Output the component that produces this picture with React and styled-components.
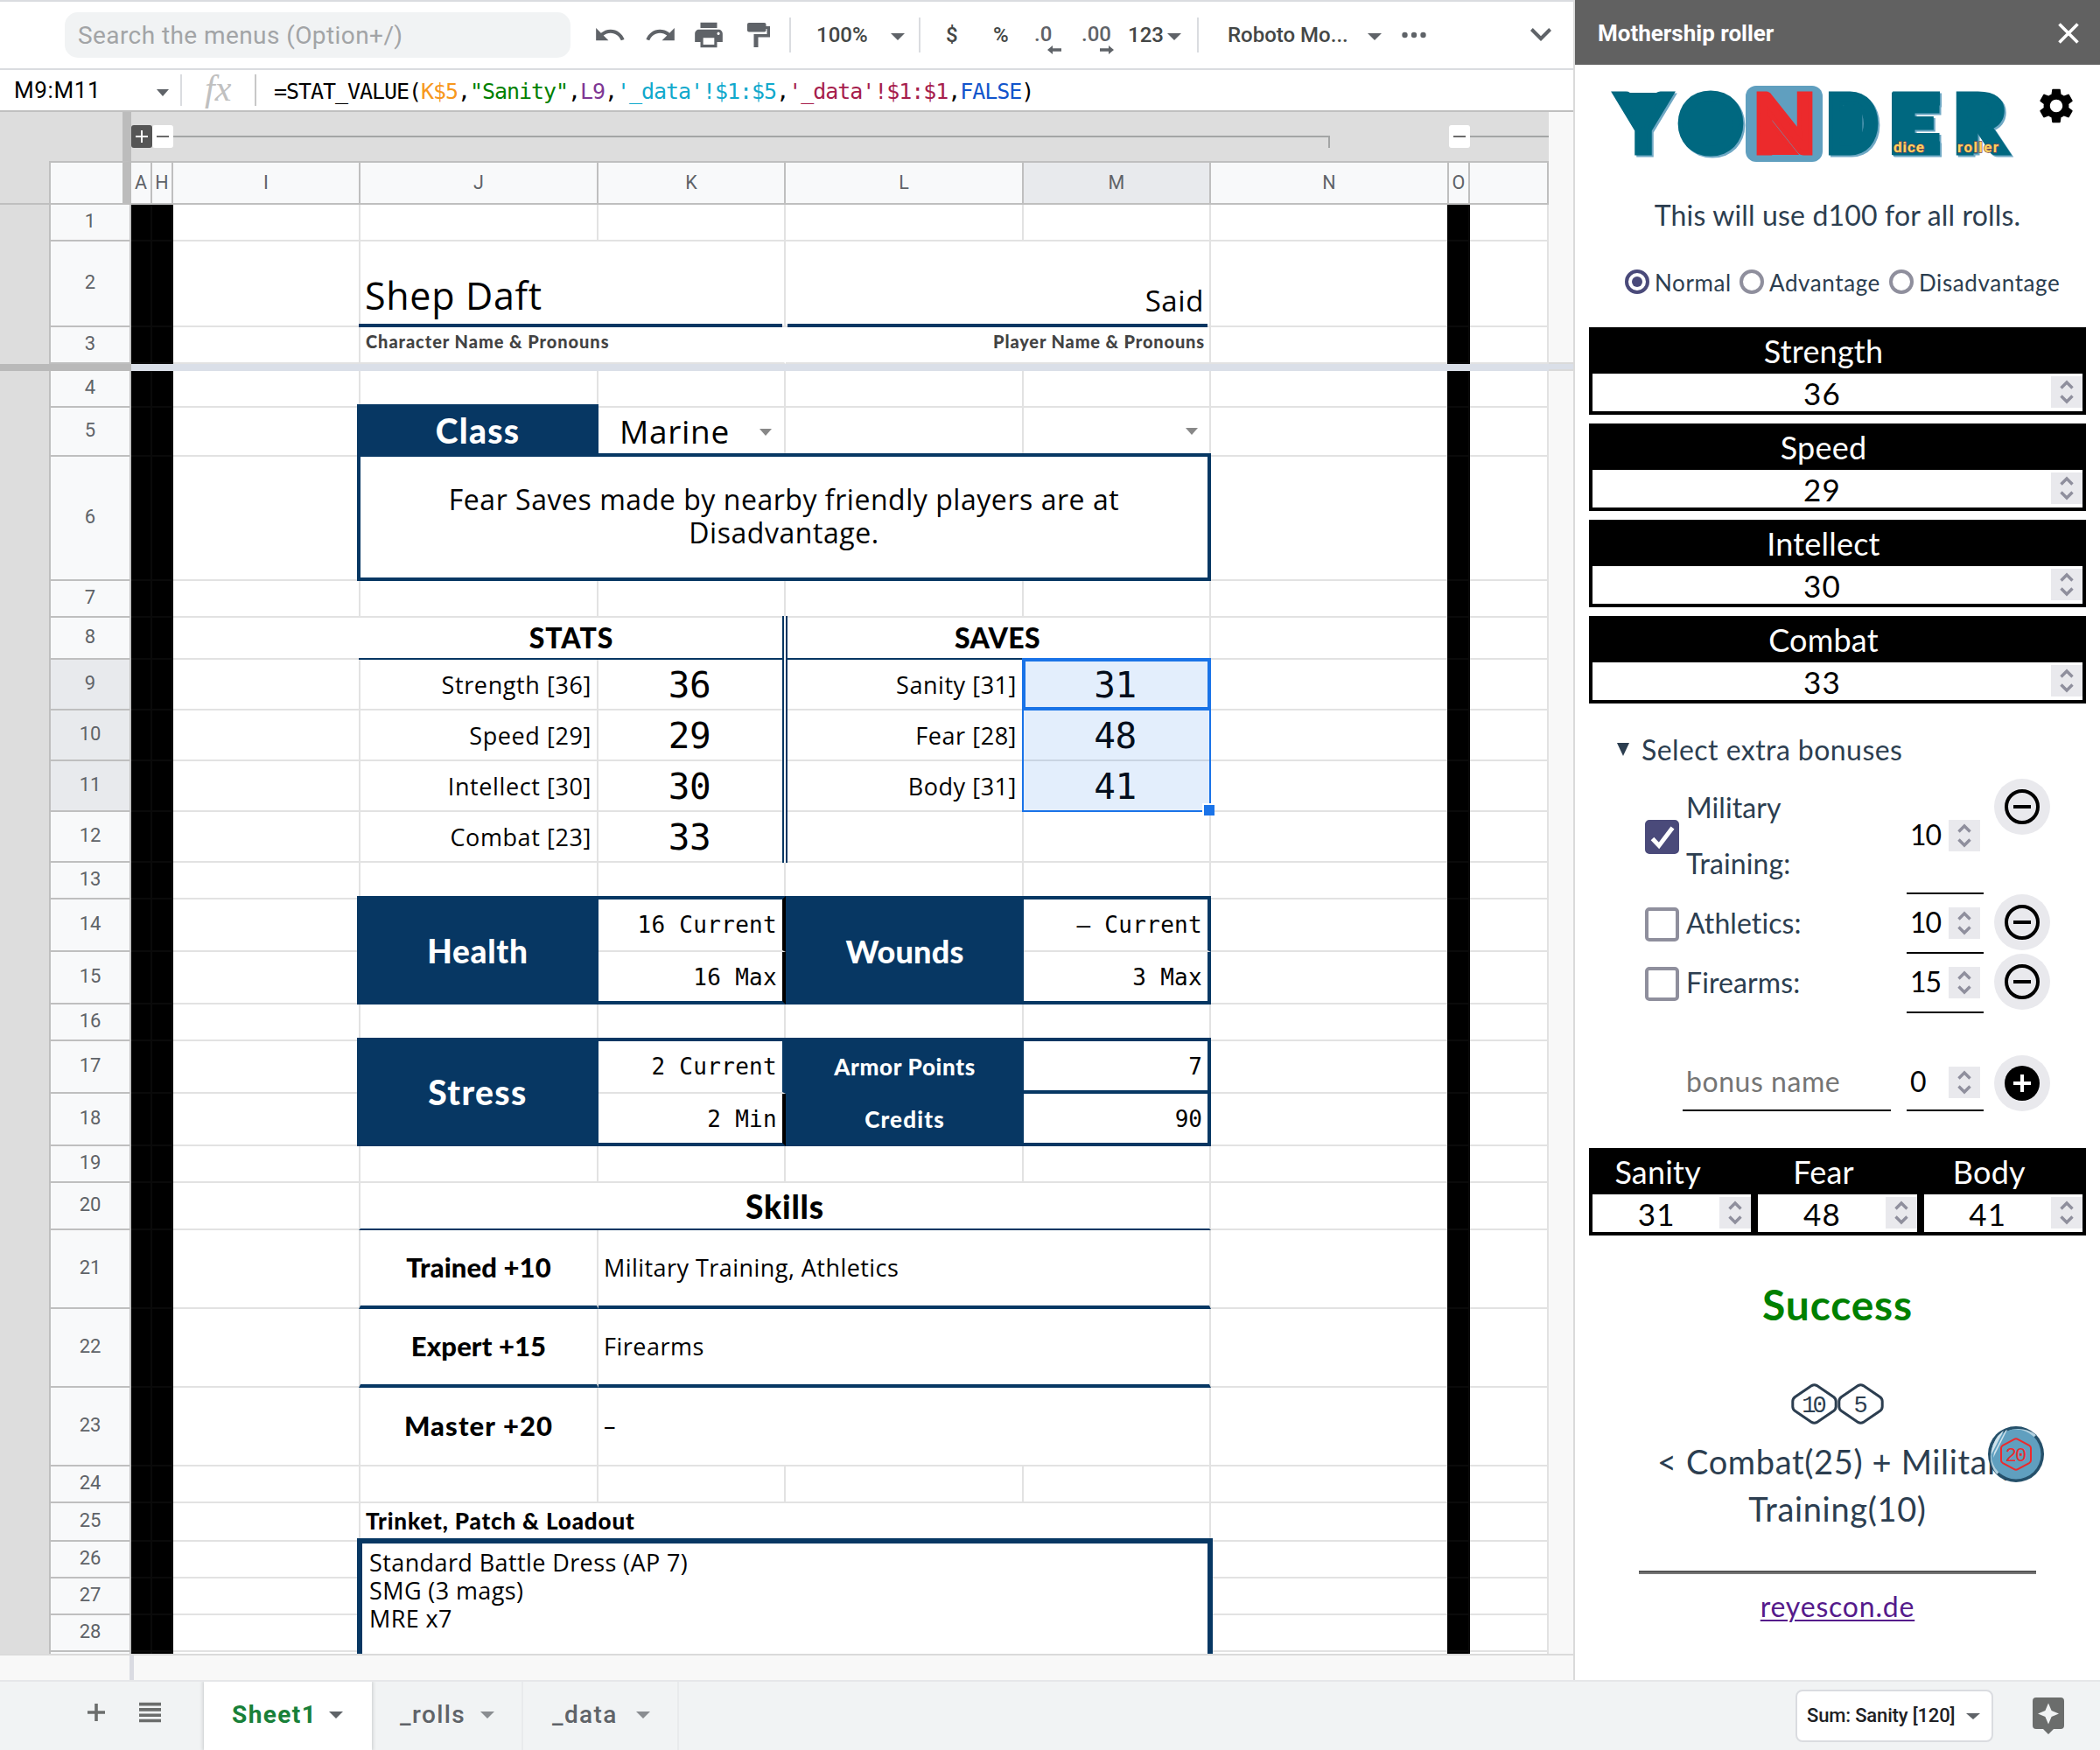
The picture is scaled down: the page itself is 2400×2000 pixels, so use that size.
import React from "react";
import styled, { createGlobalStyle, css } from "styled-components";
import { MdSettings } from "react-icons/md";

const ROBOTO = 'Roboto, "Liberation Sans", sans-serif';
const HUMANIST = '"Open Sans", "Noto Sans", sans-serif';
const DISPLAY = 'Lato, "Open Sans", sans-serif';
const MONO = '"DejaVu Sans Mono", "Liberation Mono", monospace';

const NAVY = "#073763";
const LINE = "#e2e2e2";
const HEADER_LINE = "#bfbfbf";
const BLUE = "#1a73e8";
const INK = "#2c3e50";

const GlobalStyle = createGlobalStyle`
  *, *::before, *::after { box-sizing: border-box; }
  body { margin: 0; background: #fff; font-family: ${ROBOTO}; }
`;

/* ---------- page frame ---------- */

const Page = styled.div`
  width: 2400px;
  height: 2000px;
  display: flex;
  flex-direction: column;
  overflow: hidden;
`;

const Body = styled.div`
  display: flex;
  height: 1920px;
`;

const Workspace = styled.main`
  width: 1798px;
  display: flex;
  flex-direction: column;
`;

/* ---------- toolbar ---------- */

const Toolbar = styled.div`
  height: 80px;
  flex: none;
  display: flex;
  align-items: center;
  padding-left: 74px;
  border-top: 2px solid #dadce0;
  border-bottom: 2px solid #dadce0;
  color: #444746;
  font: 500 24px/1 ${ROBOTO};
  white-space: nowrap;
`;

const Search = styled.div`
  width: 578px;
  height: 52px;
  display: flex;
  align-items: center;
  padding: 1px 0 0 15px;
  border-radius: 15px;
  background: #f1f3f4;
  color: #a2a4a6;
  font: 400 28px/1 ${ROBOTO};
  letter-spacing: 0.42px;
`;

const ToolIcon = styled.svg`
  flex: none;
  margin-left: ${(p) => p.$ml}px;
  fill: #5f6368;
`;

const ToolLabel = styled.span`
  width: ${(p) => p.$w}px;
  margin-left: ${(p) => p.$ml || 0}px;
  color: ${(p) => p.$color || "#444746"};
`;

const ToolDivider = styled.span`
  width: 2px;
  height: 40px;
  margin-left: ${(p) => p.$ml}px;
  background: #dadce0;
`;

const Decimal = styled.span`
  width: ${(p) => p.$w}px;
  height: 44px;
  margin-left: ${(p) => p.$ml || 0}px;
  padding-top: 9px;
  display: flex;
  flex-direction: column;
  align-items: flex-end;
  color: #5f6368;

  span { align-self: flex-start; height: 26px; }
  svg { fill: #5f6368; flex: none; }
`;

const Caret = styled.i`
  flex: none;
  width: 0;
  height: 0;
  margin-left: ${(p) => p.$ml || 0}px;
  margin-right: ${(p) => p.$mr || 0}px;
  margin-top: ${(p) => p.$mt || 0}px;
  border: solid transparent;
  border-width: ${(p) => p.$h || 8}px ${(p) => (p.$w || 16) / 2}px 0;
  border-top-color: ${(p) => p.$color || "#5f6368"};
`;

/* ---------- formula bar ---------- */

const FormulaBar = styled.div`
  height: 48px;
  flex: none;
  display: flex;
  align-items: center;
  border-bottom: 2px solid #c0c0c0;
  white-space: nowrap;
`;

const NameBox = styled.div`
  width: 208px;
  height: 36px;
  display: flex;
  align-items: center;
  padding-left: 16px;
  border-right: 2px solid #dadce0;
  font: 400 26px/1 ${ROBOTO};
  letter-spacing: 0.6px;
  color: #000;

  span { width: 163px; }
`;

const Fx = styled.div`
  width: 85px;
  height: 36px;
  padding: 0 0 0 26px;
  border-right: 2px solid #c8c8c8;
  color: #c0c0c0;
  font: italic 400 42px/32px "Liberation Serif", serif;
`;

const Formula = styled.div`
  padding: 2px 0 0 20px;
  font: 400 25px/1 ${MONO};
  letter-spacing: -1.05px;
  color: #000;
`;

const Token = styled.span`
  color: ${(p) => p.$color};
`;

/* ---------- sheet ---------- */

const SheetArea = styled.div`
  display: flex;
  flex: 1;
  min-height: 0;
`;

const Sheet = styled.div`
  width: 1770px;
  display: flex;
  flex-direction: column;
`;

const OutlineBand = styled.div`
  height: 56px;
  flex: none;
  display: flex;
  align-items: center;
  background: #ddd;
`;

const OutlineGutter = styled.div`
  width: 150px;
  height: 56px;
  border-right: 10px solid #bcbcbc;
`;

const Toggle = styled.span`
  position: relative;
  width: 24px;
  height: 26px;
  border-radius: 3px;
  background: ${(p) => (p.$dark ? "#555" : "#fff")};

  &::before,
  &::after {
    content: "";
    position: absolute;
    background: ${(p) => (p.$dark ? "#fff" : "#6b6b6b")};
  }
  &::before { left: 5px; right: 5px; top: 12px; height: 2px; }
  &::after { left: 11px; width: 2px; top: 6px; height: ${(p) => (p.$dark ? 14 : 0)}px; }
`;

const OutlineLine = styled.span`
  width: ${(p) => p.$w}px;
  height: 14px;
  margin: 12px ${(p) => p.$mr || 0}px 0 0;
  border-top: 2px solid #a3a5a5;
  border-right: ${(p) => (p.$tick ? "2px solid #a3a5a5" : "0")};
`;

const gridColumns = css`
  display: grid;
  grid-template-columns: 58px 92px 24px 24px 214px 272px 214px 272px 214px 272px 24px 90px;
`;

const ColumnHeads = styled.div`
  ${gridColumns}
  height: 50px;
  flex: none;
`;

const Gutter = styled.div`
  grid-column: 1;
  grid-row: ${(p) => p.$rows || 1};
  background: #ddd;
  border-right: 2px solid ${HEADER_LINE};
  border-bottom: ${(p) => (p.$head ? `2px solid ${HEADER_LINE}` : "0")};
`;

const Corner = styled.div`
  background: #f8f9fa;
  border-top: 2px solid ${HEADER_LINE};
  border-right: 10px solid #bcbcbc;
  border-bottom: 2px solid ${HEADER_LINE};
`;

const HeadCell = styled.div`
  display: flex;
  align-items: center;
  justify-content: center;
  border: solid ${HEADER_LINE};
  border-width: 2px 2px 2px 0;
  background: ${(p) => (p.$active ? "#e8eaed" : "#f8f9fa")};
  color: #5f6368;
  font: 400 21.5px/1 ${ROBOTO};
`;

const Grid = styled.div`
  ${gridColumns}
  grid-template-rows: ${(p) => p.$heights.map((h) => `${h}px`).join(" ")};
  height: ${(p) => p.$h}px;
  flex: none;
  overflow: hidden;
`;

const RowHead = styled.div`
  grid-column: 2;
  grid-row: ${(p) => p.$row};
  display: flex;
  align-items: center;
  justify-content: center;
  padding-bottom: 2px;
  border: solid ${HEADER_LINE};
  border-width: 0 2px 2px 0;
  background: ${(p) => (p.$active ? "#e8eaed" : "#f8f9fa")};
  color: #5f6368;
  font: 400 22px/1 ${ROBOTO};
`;

const BlankCell = styled.div`
  grid-column: ${(p) => p.$col};
  grid-row: ${(p) => p.$row};
  border: solid ${(p) => (p.$black ? "#0a0a0a" : LINE)};
  border-width: 0 2px 2px 0;
  background: ${(p) => (p.$black ? "#000" : "#fff")};
  margin-left: ${(p) => (p.$wide ? -2 : 0)}px;
`;

const fonts = {
  display: css`font-family: ${DISPLAY}; font-weight: 900;`,
  body: css`font-family: ${HUMANIST}; font-weight: 400;`,
  mono: css`font-family: ${MONO}; font-weight: 400;`,
};

const Cell = styled.div`
  grid-column: ${(p) => p.$col};
  grid-row: ${(p) => p.$row};
  min-width: 0;
  display: flex;
  align-items: ${(p) => p.$valign || "center"};
  justify-content: ${(p) => p.$align || "center"};
  text-align: center;
  margin: ${(p) => p.$out || "0"};
  padding: ${(p) => p.$drop || 0}px ${(p) => p.$pr || (p.$align === "flex-end" ? 6 : 0)}px ${(p) => p.$lift || 0}px
    ${(p) => (p.$align === "flex-start" ? p.$pl || 6 : 0)}px;
  border: 0 solid ${LINE};
  border-right: ${(p) => p.$br || `2px solid ${LINE}`};
  border-bottom: ${(p) => p.$bb || `2px solid ${LINE}`};
  border-top: ${(p) => p.$bt || "0"};
  border-left: ${(p) => p.$bl || "0"};
  background: ${(p) => p.$bg || "#fff"};
  color: ${(p) => p.$color || "#000"};
  ${(p) => fonts[p.$font || "body"]}
  font-size: ${(p) => p.$size || 27}px;
  line-height: ${(p) => (p.$lh ? `${p.$lh}px` : "1")};
  letter-spacing: ${(p) => p.$ls || 0}px;
  white-space: pre;
`;

const Rule = styled.div`
  grid-column: ${(p) => p.$col};
  grid-row: ${(p) => p.$row};
  align-self: end;
  height: 4px;
  margin: 0 4px 0 ${(p) => p.$ml}px;
  background: ${NAVY};
`;

const DoubleRule = styled.div`
  grid-column: 7;
  grid-row: 5 / 10;
  justify-self: end;
  width: 6px;
  margin: -2px -2px 0 0;
  border: solid ${NAVY};
  border-width: 0 2px;
  background: #fff;
`;

const SelectionRange = styled.div`
  grid-column: 9;
  grid-row: 6 / 9;
  position: relative;
  margin: -2px 0 0 -2px;
  border: 2px solid ${BLUE};
  background: rgba(26, 115, 232, 0.12);

  &::after {
    content: "";
    position: absolute;
    right: -6px;
    bottom: -6px;
    width: 12px;
    height: 12px;
    background: ${BLUE};
    box-shadow: -2px -2px 0 #fff;
  }
`;

const ActiveCell = styled.div`
  grid-column: 9;
  grid-row: 6;
  margin: -2px 0 0 -2px;
  border: 4px solid ${BLUE};
`;

const Loadout = styled.div`
  grid-column: 6 / 10;
  grid-row: 23 / 27;
  margin: -4px -2px -4px -4px;
  padding: 6px 8px;
  border: solid ${NAVY};
  border-width: 6px 6px 0;
  background: #fff;
  color: #000;
  font: 400 27px/32px ${HUMANIST};
  letter-spacing: 0.4px;
  white-space: pre-line;
`;

const FreezeBar = styled.div`
  height: 8px;
  flex: none;
  background: #dadfe8;
  border-left: 150px solid #b9b9b9;
`;

const VScroll = styled.div`
  flex: 1;
  background: #f8f8f8;
  display: flex;
  flex-direction: column;

  &::before {
    content: "";
    height: 10px;
    margin-top: 286px;
    background: #dadfe8;
    border: solid #dadada;
    border-width: 2px 0;
  }
`;

const HScroll = styled.div`
  height: 30px;
  flex: none;
  display: flex;
  border-top: 2px solid #dadada;
  background: #f8f8f8;

  &::before {
    content: "";
    width: 153px;
    border-right: 5px solid #dadbe2;
  }
`;

/* ---------- sidebar ---------- */

const Sidebar = styled.aside`
  position: relative;
  width: 602px;
  border-left: 2px solid #dadada;
  background: #fff;
  color: ${INK};
  font: 400 32px/1 ${DISPLAY};
  white-space: nowrap;
`;

const SidebarTitle = styled.header`
  height: 74px;
  display: flex;
  align-items: center;
  justify-content: space-between;
  padding: 1px 24px 0 26px;
  background: #616161;
  color: #fff;
  font: 700 26px/1 ${ROBOTO};
`;

const Brand = styled.div`
  height: 113px;
  display: flex;
  align-items: flex-start;
  padding: 21px 0 0 40px;
`;

const LogoArt = styled.svg`
  overflow: visible;
  font-family: Lato, sans-serif;
  font-weight: 900;
  font-size: 93px;
`;

const LogoTeal = styled.g`
  fill: #006880;
  stroke: #006880;
  filter: drop-shadow(2px 2px 0 #6fa8c4);
`;

const LogoRed = styled.g`
  fill: #ec2a2c;
  stroke: #ec2a2c;
`;

const LogoCaption = styled.g`
  font: 700 17px Roboto, sans-serif;
  fill: #ffd35e;
  stroke: #7c4650;
  stroke-width: 1.4px;
  paint-order: stroke;
`;

const GearButton = styled.span`
  width: 48px;
  height: 48px;
  margin: 2px 0 0 26px;
  color: #000;
  svg { display: block; }
`;

const Intro = styled.p`
  margin: 39px 0 0;
  line-height: 40px;
  text-align: center;
  letter-spacing: 0.16px;
`;

const Modes = styled.div`
  display: flex;
  margin-top: 42px;
  padding-left: 57px;
  font-size: 26px;
`;

const Mode = styled.label`
  width: ${(p) => p.$w}px;
  height: 28px;
  display: flex;
  align-items: center;
  gap: 6px;
  letter-spacing: 0.6px;

  em { font-style: normal; padding-top: 2px; }
`;

const Radio = styled.span`
  flex: none;
  width: 28px;
  height: 28px;
  padding: 4px;
  border: 4px solid ${(p) => (p.$on ? "#4a4a7a" : "#8f8f9d")};
  border-radius: 50%;
  background: ${(p) => (p.$on ? "#4a4a7a" : "#fff")};
  background-clip: content-box;
`;

const StatList = styled.div`
  display: flex;
  flex-direction: column;
  gap: 10px;
  margin: 38px 16px 0;
`;

const SaveList = styled.div`
  display: flex;
  margin: 42px 16px 0;
`;

const StatBox = styled.div`
  flex: 1 0 0;
  min-height: 100px;
  border: 4px solid #000;
  background: #000;
`;

const StatName = styled.div`
  height: 49px;
  display: flex;
  align-items: center;
  justify-content: center;
  padding: 0 32px 3px 0;
  color: #fff;
  font-size: 36px;
  letter-spacing: 0.2px;
`;

const StatValue = styled.div`
  height: 43px;
  display: flex;
  align-items: flex-start;
  background: #fff;
  color: #000;
  font-size: 35px;
  line-height: 44px;
  letter-spacing: 1.2px;

  span { flex: 1; text-align: center; padding-left: 1px; }
`;

const SpinBox = styled.svg`
  flex: none;
  margin-top: ${(p) => p.$mt || 0}px;
  background: #e9e9ed;
  fill: none;
  stroke: #8f8f9d;
  stroke-width: 3.4;
`;

const Summary = styled.div`
  height: 40px;
  display: flex;
  align-items: center;
  margin-top: 32px;
  padding-left: 48px;
  letter-spacing: 0.44px;

  span { margin-left: 14px; padding-top: 2px; }
`;

const BonusList = styled.div`
  margin-top: 14px;
`;

const BonusRow = styled.div`
  display: flex;
  align-items: stretch;
  min-height: ${(p) => (p.$new ? 64 : 68)}px;
  margin-top: ${(p) => (p.$new ? 48 : 0)}px;
  padding: 0 0 0 ${(p) => (p.$new ? 123 : 80)}px;
`;

const CheckBox = styled.span`
  align-self: center;
  width: 39px;
  height: 39px;
  border: 4px solid ${(p) => (p.$on ? "#4a4a7a" : "#8f8f9d")};
  border-radius: 5px;
  background: ${(p) => (p.$on ? "#4a4a7a" : "#fff")};
  svg { display: block; width: 31px; height: 31px; }
`;

const BonusLabel = styled.span`
  width: 252px;
  margin-left: 8px;
  padding: 1px 90px 3px 0;
  line-height: 64px;
  white-space: normal;
  letter-spacing: 0.1px;
`;

const BonusName = styled.span`
  width: 238px;
  margin-right: 18px;
  padding: 0 0 3px 4px;
  display: flex;
  align-items: center;
  border-bottom: 2px solid #000;
  color: #757575;
  letter-spacing: 0.55px;
`;

const BonusValue = styled.span`
  width: 88px;
  display: flex;
  align-items: center;
  justify-content: space-between;
  padding: 0 4px 0 4px;
  border-bottom: 2px solid #000;
  color: #000;
  letter-spacing: -1px;

  span { padding-bottom: 3px; }
`;

const RoundButton = styled.span`
  width: 64px;
  height: 64px;
  display: flex;
  align-items: center;
  justify-content: center;
  margin-left: 12px;
  border-radius: 50%;
  background: #e9e9ed;
`;

const Outcome = styled.h2`
  margin: 49px 0 0;
  color: #008000;
  text-align: center;
  font: 700 48px/60px ${DISPLAY};
  letter-spacing: 0.8px;
`;

const DiceRow = styled.div`
  height: 47px;
  display: flex;
  justify-content: center;
  margin-top: 60px;
`;

const DieSvg = styled.svg`
  overflow: visible;
  font-family: "Liberation Mono", monospace;
  font-size: 27px;
  letter-spacing: -4px;
  fill: ${INK};
`;

const Breakdown = styled.p`
  margin: 15px 0 0;
  text-align: center;
  font-size: 38px;
  line-height: 54px;
  letter-spacing: 0.65px;
`;

const Separator = styled.hr`
  width: 454px;
  height: 4px;
  margin: 44px auto 0;
  border: 0;
  border-top: 2px solid #555;
  background: #777;
`;

const SiteLink = styled.a`
  display: block;
  margin-top: 17px;
  line-height: 40px;
  text-align: center;
  color: #551a8b;
  letter-spacing: 0.8px;
  text-decoration: underline;
  text-decoration-thickness: 2px;
  text-underline-offset: 3px;
`;

const DiceFab = styled.svg`
  position: absolute;
  left: 472px;
  top: 1630px;
  font-family: "Liberation Mono", monospace;
  font-size: 22px;
  letter-spacing: -2px;
`;

/* ---------- bottom bar ---------- */

const BottomBar = styled.footer`
  height: 80px;
  display: flex;
  align-items: center;
  padding: 0 41px 0 100px;
  border-top: 2px solid #e6e7e9;
  background: #f1f3f4;
`;

const BarIcon = styled.svg`
  flex: none;
  margin: 0 0 ${(p) => p.$mb || 0}px ${(p) => p.$ml || 0}px;
  stroke: #6b6d6c;
  stroke-width: 3.6;
`;

const Tab = styled.div`
  width: ${(p) => p.$w}px;
  height: 78px;
  display: flex;
  align-items: center;
  margin-left: ${(p) => p.$ml || 0}px;
  padding: 0 0 2px ${(p) => p.$pl}px;
  border-right: ${(p) => (p.$active ? 0 : "2px solid #e8eaec")};
  background: ${(p) => (p.$active ? "#fff" : "transparent")};
  box-shadow: ${(p) => (p.$active ? "0 0 4px 1px rgba(60, 64, 67, 0.22)" : "none")};
  clip-path: ${(p) => (p.$active ? "inset(0 -6px 0 -6px)" : "none")};
  color: ${(p) => (p.$active ? "#188038" : "#5f6368")};
  font: ${(p) => (p.$active ? 700 : 500)} 28px/1 ${ROBOTO};
  letter-spacing: 1.4px;

  span { width: ${(p) => p.$label}px; }
`;

const SumBox = styled.div`
  width: 226px;
  height: 60px;
  display: flex;
  align-items: center;
  margin: 0 45px 0 auto;
  padding-left: 11px;
  border: 2px solid #dadce0;
  border-radius: 8px;
  background: #fff;
  color: #202124;
  font: 500 22px/1 ${ROBOTO};
  letter-spacing: -0.16px;

  span { width: 182px; }
`;

/* ---------- drawings ---------- */

function Spinner({ mt }) {
  return (
    <SpinBox width="36" height="36" viewBox="0 0 36 36" $mt={mt}>
      <path d="M11.500 13.500 18 7l6.500 6.500M11.500 22.500 18 29l6.500-6.500" />
    </SpinBox>
  );
}

function Minus() {
  return (
    <svg width="40" height="40" viewBox="0 0 40 40" fill="none" stroke="#000" strokeWidth="4">
      <circle cx="20" cy="20" r="18" />
      <path d="M10 20h20" />
    </svg>
  );
}

function Plus() {
  return (
    <svg width="40" height="40" viewBox="0 0 40 40">
      <circle cx="20" cy="20" r="20" />
      <path d="M10 20h20M20 10v20" stroke="#fff" strokeWidth="4" />
    </svg>
  );
}

function DieFace({ value }) {
  return (
    <DieSvg width="53" height="47" viewBox="0 0 53 47">
      <path
        d="M23.500 2.600q3-1.800 6 0L48.500 15.500q2.700 2 2.700 5v6q0 3-2.700 5L29.500 44.400q-3 1.800-6 0L4.500 31.500q-2.700-2-2.700-5v-6q0-3 2.700-5z"
        fill="none"
        stroke={INK}
        strokeWidth="3"
      />
      <text x={value.length > 1 ? 24.5 : 24.5} y="33" textAnchor="middle">
        {value}
      </text>
    </DieSvg>
  );
}

const letters = [
  { ch: "Y", x: 6.5, w: 63 },
  { ch: "O", x: 77, w: 76 },
  { ch: "D", x: 246, w: 61 },
  { ch: "E", x: 318, w: 60 },
  { ch: "R", x: 391, w: 63 },
];

function Logo() {
  return (
    <LogoArt width="460" height="92" viewBox="0 0 460 92">
      <LogoTeal>
        {letters.map((l) => (
          <text key={l.ch} x={l.x} y="79.500" strokeWidth="5" textLength={l.w} lengthAdjust="spacingAndGlyphs">
            {l.ch}
          </text>
        ))}
        <path d="M16 12.500h44L40 52h-5z" strokeWidth="3" />
        <ellipse cx="115" cy="46" rx="26" ry="26" />
        <rect x="262" y="24" width="26" height="46" rx="10" />
        <path d="M323 11.500h24.500v69.500H323zM347 11.500h28.500v22H347zM347 58h28.500v23H347z" strokeWidth="2" />
        <rect x="408" y="22" width="26" height="22" rx="8" />
        <rect x="400" y="40" width="20" height="40" />
      </LogoTeal>
      <rect x="155" y="3" width="88" height="87" rx="12" fill="#609fbf" />
      <LogoRed>
        <text x="163" y="79.500" strokeWidth="5" textLength="73" lengthAdjust="spacingAndGlyphs">
          N
        </text>
        <path d="M182 42v38h30z" strokeWidth="4" />
      </LogoRed>
      <LogoCaption>
        <text x="324" y="79" textLength="35">dice</text>
        <text x="397" y="79" textLength="47">roller</text>
      </LogoCaption>
    </LogoArt>
  );
}

/* ---------- data ---------- */

const frozenHeights = [42, 98, 42];
const mainHeights = [42, 56, 142, 42, 48, 58, 58, 58, 58, 42, 60, 60, 42, 60, 60, 42, 54, 90, 90, 90, 42, 44, 42, 42, 42, 42];

const columns = ["A", "H", "I", "J", "K", "L", "M", "N", "O", ""];

const stats = [
  ["Strength [36]", "36"],
  ["Speed [29]", "29"],
  ["Intellect [30]", "30"],
  ["Combat [23]", "33"],
];

const saves = [
  ["Sanity [31]", "31"],
  ["Fear [28]", "48"],
  ["Body [31]", "41"],
];

const skills = [
  ["Trained +10", "Military Training, Athletics", 0.1, 0.45],
  ["Expert +15", "Firearms", 0.1, 0.5],
  ["Master +20", "–", 1.1, 0],
];

const formula = [
  ["=STAT_VALUE(", "#000"],
  ["K$5", "#f7981d"],
  [",", "#000"],
  ['"Sanity"', "#008000"],
  [",", "#000"],
  ["L9", "#7e3794"],
  [",", "#000"],
  ["'_data'!$1:$5", "#11a9cc"],
  [",", "#000"],
  ["'_data'!$1:$1", "#a61d4c"],
  [",", "#000"],
  ["FALSE", "#1155cc"],
  [")", "#000"],
];

function Blanks({ heights, first }) {
  return heights.map((_, i) => {
    const row = i + 1;
    const n = i + first;
    return (
      <React.Fragment key={n}>
        <RowHead $row={row} $active={n >= 9 && n <= 11}>
          {n < 29 ? n : ""}
        </RowHead>
        {columns.map((c, j) => (
          <BlankCell key={j} $row={row} $col={j + 3} $black={"AHO".includes(c) && c !== ""} $wide={c === "O"} />
        ))}
      </React.Fragment>
    );
  });
}

const thick = `4px solid ${NAVY}`;
const black = "4px solid #000";

function FrozenRows() {
  return (
    <Grid $heights={frozenHeights} $h={182}>
      <Gutter $rows="1 / 4" />
      <Blanks heights={frozenHeights} first={1} />
      <Cell $col="6 / 8" $row={2} $align="flex-start" $valign="flex-end" $pl={5} $lift={13} $size={43} $ls={0.7}>Shep Daft</Cell>
      <Cell $col="8 / 10" $row={2} $align="flex-end" $valign="flex-end" $lift={12} $size={33} $ls={0.6}>Said</Cell>
      <Cell $col="6 / 8" $row={3} $align="flex-start" $lift={8} $font="display" $size={20} $ls={0.94} $color="#434343" $br="2px solid #fff">
        Character Name &amp; Pronouns
      </Cell>
      <Cell $col="8 / 10" $row={3} $align="flex-end" $pr={5} $lift={8} $font="display" $size={20} $ls={0.85} $color="#434343">
        Player Name &amp; Pronouns
      </Cell>
      <Rule $col="6 / 8" $row={2} $ml={-2} />
      <Rule $col="8 / 10" $row={2} $ml={2} />
    </Grid>
  );
}

function MainRows() {
  return (
    <Grid $heights={mainHeights} $h={1466}>
      <Gutter $rows="1 / 27" />
      <Blanks heights={mainHeights} first={4} />

      <Cell $col={6} $row={2} $out="-4px 0 0 -4px" $bg={NAVY} $color="#fff" $br="0" $bb="0" $font="display" $size={39} $ls={1.3}>Class</Cell>
      <Cell $col={7} $row={2} $align="flex-start" $pl={24} $lift={2} $size={37} $ls={0.7}>
        Marine
        <Caret $w={15} $h={8} $ml={34} $mt={3} $color="#888" />
      </Cell>
      <Cell $col={9} $row={2} $align="flex-end">
        <Caret $w={15} $h={8} $mr={7} $color="#888" />
      </Cell>
      <Cell $col="6 / 10" $row={3} $out="-4px 0 0 -4px" $bt={thick} $bl={thick} $br={thick} $bb={thick} $lift={3} $size={32} $lh={38} $ls={0.54}>
        {"Fear Saves made by nearby friendly players are at\nDisadvantage."}
      </Cell>

      <Cell $col="6 / 8" $row={5} $out="0 0 0 -2px" $bb={`2px solid ${NAVY}`} $lift={1} $font="display" $size={32} $ls={0.95}>STATS</Cell>
      <Cell $col="8 / 10" $row={5} $bb={`2px solid ${NAVY}`} $lift={1} $font="display" $size={32} $ls={0.4}>SAVES</Cell>
      {stats.map(([name, value], i) => (
        <React.Fragment key={name}>
          <Cell $col={6} $row={6 + i} $align="flex-end" $ls={0.6}>{name}</Cell>
          <Cell $col={7} $row={6 + i} $pr={4} $drop={2} $font="mono" $size={41} $ls={-0.5}>{value}</Cell>
        </React.Fragment>
      ))}
      {saves.map(([name, value], i) => (
        <React.Fragment key={name}>
          <Cell $col={8} $row={6 + i} $align="flex-end" $ls={0.55}>{name}</Cell>
          <Cell $col={9} $row={6 + i} $pr={3} $drop={2} $font="mono" $size={41} $ls={-0.5}>{value}</Cell>
        </React.Fragment>
      ))}
      <DoubleRule />
      <SelectionRange />
      <ActiveCell />

      <Cell $col={6} $row="11 / 13" $out="-4px 0 0 -4px" $drop={1} $bg={NAVY} $br="0" $bb="0" $color="#fff" $font="display" $size={37} $ls={0.7}>Health</Cell>
      <Cell $col={7} $row={11} $out="-4px 0 0 0" $bt={thick} $br={black} $align="flex-end" $font="mono" $size={26} $ls={0.3}>16 Current</Cell>
      <Cell $col={7} $row={12} $drop={2} $br={black} $bb={thick} $align="flex-end" $font="mono" $size={26} $ls={0.3}>16 Max</Cell>
      <Cell $col={8} $row="11 / 13" $out="-4px 0 0 0" $drop={1} $bg={NAVY} $br="0" $bb="0" $color="#fff" $font="display" $size={36} $ls={0.2}>Wounds</Cell>
      <Cell $col={9} $row={11} $out="-4px 0 0 0" $bt={thick} $br={thick} $align="flex-end" $font="mono" $size={26} $ls={0.3}>– Current</Cell>
      <Cell $col={9} $row={12} $drop={2} $br={thick} $bb={thick} $align="flex-end" $font="mono" $size={26} $ls={0.3}>3 Max</Cell>

      <Cell $col={6} $row="14 / 16" $out="-4px 0 0 -4px" $bg={NAVY} $br="0" $bb="0" $color="#fff" $font="display" $size={39} $ls={1.4}>Stress</Cell>
      <Cell $col={7} $row={14} $out="-4px 0 0 0" $bt={thick} $br={thick} $align="flex-end" $font="mono" $size={26} $ls={0.3}>2 Current</Cell>
      <Cell $col={7} $row={15} $drop={2} $br={black} $bb={thick} $align="flex-end" $font="mono" $size={26} $ls={0.3}>2 Min</Cell>
      <Cell $col={8} $row={14} $out="-4px 0 0 0" $drop={1} $bg={NAVY} $br="0" $bb="0" $color="#fff" $font="display" $size={26} $ls={0.65}>Armor Points</Cell>
      <Cell $col={8} $row={15} $lift={2} $bg={NAVY} $br="0" $bb="0" $color="#fff" $font="display" $size={26} $ls={1.17}>Credits</Cell>
      <Cell $col={9} $row={14} $out="-4px 0 0 0" $drop={2} $bt={thick} $br={thick} $bb={thick} $align="flex-end" $font="mono" $size={26}>7</Cell>
      <Cell $col={9} $row={15} $drop={2} $br={thick} $bb={thick} $align="flex-end" $font="mono" $size={26}>90</Cell>

      <Cell $col="6 / 10" $row={17} $out="0 0 0 -2px" $bl={`2px solid ${LINE}`} $bb={`2px solid ${NAVY}`} $drop={1} $font="display" $size={37} $ls={0.8}>Skills</Cell>
      {skills.map(([name, text, ls, textLs], i) => (
        <React.Fragment key={name}>
          <Cell $col={6} $row={18 + i} $out="0 0 0 -2px" $bl={`2px solid ${LINE}`} $bb={i < 2 ? thick : undefined} $lift={1} $font="display" $size={31} $ls={ls}>{name}</Cell>
          <Cell $col="7 / 10" $row={18 + i} $bb={i < 2 ? thick : undefined} $align="flex-start" $lift={i < 2 ? 2 : 4} $ls={textLs}>{text}</Cell>
        </React.Fragment>
      ))}

      <Cell $col="6 / 10" $row={22} $align="flex-start" $pl={6} $lift={2} $font="display" $size={26} $ls={0.86}>Trinket, Patch &amp; Loadout</Cell>
      <Loadout>{"Standard Battle Dress (AP 7)\nSMG (3 mags)\nMRE x7"}</Loadout>
    </Grid>
  );
}

function Stat({ name, value }) {
  return (
    <StatBox>
      <StatName>{name}</StatName>
      <StatValue>
        <span>{value}</span>
        <Spinner mt={3} />
      </StatValue>
    </StatBox>
  );
}

function Bonus({ name, value, checked }) {
  return (
    <BonusRow>
      <CheckBox $on={checked}>
        {checked && (
          <svg viewBox="0 0 31 31" fill="none" stroke="#fff" strokeWidth="5">
            <path d="M4.500 17.500l7.500 8L27.500 5" />
          </svg>
        )}
      </CheckBox>
      <BonusLabel>{name}</BonusLabel>
      <BonusValue>
        <span>{value}</span>
        <Spinner />
      </BonusValue>
      <RoundButton>
        <Minus />
      </RoundButton>
    </BonusRow>
  );
}

export default function App() {
  return (
    <Page>
      <GlobalStyle />
      <Body>
        <Workspace>
          <Toolbar>
            <Search>Search the menus (Option+/)</Search>
            <ToolIcon $ml={26} width="38" height="38" viewBox="0 0 24 24">
              <path d="M12.500 8c-2.650 0-5.050.99-6.900 2.600L2 7v9h9l-3.620-3.620c1.390-1.160 3.160-1.880 5.120-1.880 3.540 0 6.550 2.310 7.600 5.500l2.370-.78C21.080 11.030 17.150 8 12.500 8z" />
            </ToolIcon>
            <ToolIcon $ml={20} width="38" height="38" viewBox="0 0 24 24">
              <path d="M18.400 10.600C16.550 8.990 14.150 8 11.500 8c-4.650 0-8.580 3.030-9.960 7.220L3.900 16c1.050-3.190 4.050-5.500 7.600-5.500 1.950 0 3.730.72 5.120 1.880L13 16h9V7l-3.600 3.600z" />
            </ToolIcon>
            <ToolIcon $ml={17} width="38" height="38" viewBox="0 0 24 24">
              <path d="M19 8H5c-1.660 0-3 1.340-3 3v6h4v4h12v-4h4v-6c0-1.660-1.340-3-3-3zm-3 11H8v-5h8v5zm3-7c-.55 0-1-.45-1-1s.45-1 1-1 1 .45 1 1-.45 1-1 1zm-1-9H6v4h12V3z" />
            </ToolIcon>
            <ToolIcon $ml={24} width="28" height="30" viewBox="0 0 28 30">
              <rect x="1" y="1" width="21.500" height="10.500" rx="2" />
              <path d="M22 5h5v12.500H13.500V29h-5V14H23.500V8H22z" />
            </ToolIcon>
            <ToolDivider $ml={21} />
            <ToolLabel $ml={29} $w={85}>100%</ToolLabel>
            <Caret $mt={4} />
            <ToolDivider $ml={16} />
            <ToolLabel $ml={29} $w={54}>$</ToolLabel>
            <ToolLabel $w={47}>%</ToolLabel>
            <Decimal $w={31}>
              <span>.0</span>
              <svg width="16" height="10" viewBox="0 0 16 10"><path d="M0 5l6-5v3.200h10v3.600H6V10z" /></svg>
            </Decimal>
            <Decimal $w={37} $ml={23}>
              <span>.00</span>
              <svg width="16" height="10" viewBox="0 0 16 10"><path d="M16 5l-6-5v3.200H0v3.600h10V10z" /></svg>
            </Decimal>
            <ToolLabel $ml={16} $w={45}>123</ToolLabel>
            <Caret $mt={4} />
            <ToolDivider $ml={18} />
            <ToolLabel $ml={33} $w={160}>Roboto Mo...</ToolLabel>
            <Caret $mt={4} />
            <ToolIcon $ml={23} width="28" height="8" viewBox="0 0 28 8">
              <circle cx="3.500" cy="4" r="3.200" />
              <circle cx="14" cy="4" r="3.200" />
              <circle cx="24.500" cy="4" r="3.200" />
            </ToolIcon>
            <ToolIcon $ml={119} width="24" height="16" viewBox="0 0 24 16">
              <path d="M2.800 0 12 9.200 21.200 0 24 2.900 12 15 0 2.900z" />
            </ToolIcon>
          </Toolbar>

          <FormulaBar>
            <NameBox>
              <span>M9:M11</span>
              <Caret $w={15} $h={8} $mt={5} />
            </NameBox>
            <Fx>fx</Fx>
            <Formula>
              {formula.map(([text, color], i) => (
                <Token key={i} $color={color}>{text}</Token>
              ))}
            </Formula>
          </FormulaBar>

          <SheetArea>
            <Sheet>
              <OutlineBand>
                <OutlineGutter />
                <Toggle $dark />
                <Toggle />
                <OutlineLine $w={1322} $mr={136} $tick />
                <Toggle />
                <OutlineLine $w={90} />
              </OutlineBand>
              <ColumnHeads>
                <Gutter $head />
                <Corner />
                {columns.map((c, i) => (
                  <HeadCell key={i} $active={c === "M"}>{c}</HeadCell>
                ))}
              </ColumnHeads>
              <FrozenRows />
              <FreezeBar />
              <MainRows />
            </Sheet>
            <VScroll />
          </SheetArea>
          <HScroll />
        </Workspace>

        <Sidebar>
          <SidebarTitle>
            Mothership roller
            <svg width="24" height="24" viewBox="0 0 24 24" stroke="#fff" strokeWidth="3.600">
              <path d="M1.500 1.500l21 21M22.500 1.500l-21 21" />
            </svg>
          </SidebarTitle>
          <Brand>
            <Logo />
            <GearButton>
              <MdSettings size={48} />
            </GearButton>
          </Brand>
          <Intro>This will use d100 for all rolls.</Intro>
          <Modes>
            <Mode $w={131}><Radio $on /><em>Normal</em></Mode>
            <Mode $w={171}><Radio /><em>Advantage</em></Mode>
            <Mode $w={210}><Radio /><em>Disadvantage</em></Mode>
          </Modes>
          <StatList>
            <Stat name="Strength" value="36" />
            <Stat name="Speed" value="29" />
            <Stat name="Intellect" value="30" />
            <Stat name="Combat" value="33" />
          </StatList>
          <Summary>
            <Caret $w={15} $h={15} $color={INK} />
            <span>Select extra bonuses</span>
          </Summary>
          <BonusList>
            <Bonus name="Military Training:" value="10" checked />
            <Bonus name="Athletics:" value="10" />
            <Bonus name="Firearms:" value="15" />
            <BonusRow $new>
              <BonusName>bonus name</BonusName>
              <BonusValue>
                <span>0</span>
                <Spinner />
              </BonusValue>
              <RoundButton>
                <Plus />
              </RoundButton>
            </BonusRow>
          </BonusList>
          <SaveList>
            <Stat name="Sanity" value="31" />
            <Stat name="Fear" value="48" />
            <Stat name="Body" value="41" />
          </SaveList>
          <Outcome>Success</Outcome>
          <DiceRow>
            <DieFace value="10" />
            <DieFace value="5" />
          </DiceRow>
          <Breakdown>
            &lt; Combat(25) + Military
            <br />
            Training(10)
          </Breakdown>
          <Separator />
          <SiteLink>reyescon.de</SiteLink>
          <DiceFab width="64" height="64" viewBox="0 0 64 64">
            <circle cx="32" cy="32" r="32" fill="#25506a" />
            <path d="M10 55A32 32 0 0 1 55 10z" fill="#b3d1e0" />
            <circle cx="32" cy="32" r="28.500" fill="#609fbf" />
            <path d="M4 28Q7 12 18 5L4 32zM7 30 20 5l2-1L6 36z" fill="#cfe3ec" />
            <path d="M30 14.800q2-1.200 4 0l13 7q2 1.200 2 3.200v14q0 2-2 3.200l-13 7q-2 1.200-4 0l-13-7q-2-1.200-2-3.200V25q0-2 2-3.200z" fill="none" stroke="#ec2a2c" strokeWidth="2" />
            <text x="31" y="39.500" textAnchor="middle" fill="#ec2a2c">20</text>
          </DiceFab>
        </Sidebar>
      </Body>

      <BottomBar>
        <BarIcon $mb={8} width="20" height="20" viewBox="0 0 20 20">
          <path d="M0 10h20M10 0v20" />
        </BarIcon>
        <BarIcon $ml={39} $mb={8} width="25" height="24" viewBox="0 0 25 24">
          <path d="M0 2.600h25M0 8.900h25M0 15.200h25M0 21.500h25" />
        </BarIcon>
        <Tab $active $ml={49} $w={192} $pl={32} $label={111}>
          <span>Sheet1</span>
          <Caret />
        </Tab>
        <Tab $w={173} $pl={32} $label={92}>
          <span>_rolls</span>
          <Caret $color="#8a8d91" />
        </Tab>
        <Tab $w={178} $pl={33} $label={96}>
          <span>_data</span>
          <Caret $color="#8a8d91" />
        </Tab>
        <SumBox>
          <span>Sum: Sanity [120]</span>
          <Caret $h={7} />
        </SumBox>
        <svg width="36" height="42" viewBox="0 0 36 42">
          <path d="M4 0h28q4 0 4 4v28q0 4-4 4h-8l-6 6-6-6H4q-4 0-4-4V4q0-4 4-4z" fill="#6b6d6c" />
          <path d="M18 6.500l3.600 8.400 8.400 3.600-8.400 3.600L18 30.500l-3.600-8.400L6 18.500l8.400-3.600z" fill="#f1f3f4" />
        </svg>
      </BottomBar>
    </Page>
  );
}
